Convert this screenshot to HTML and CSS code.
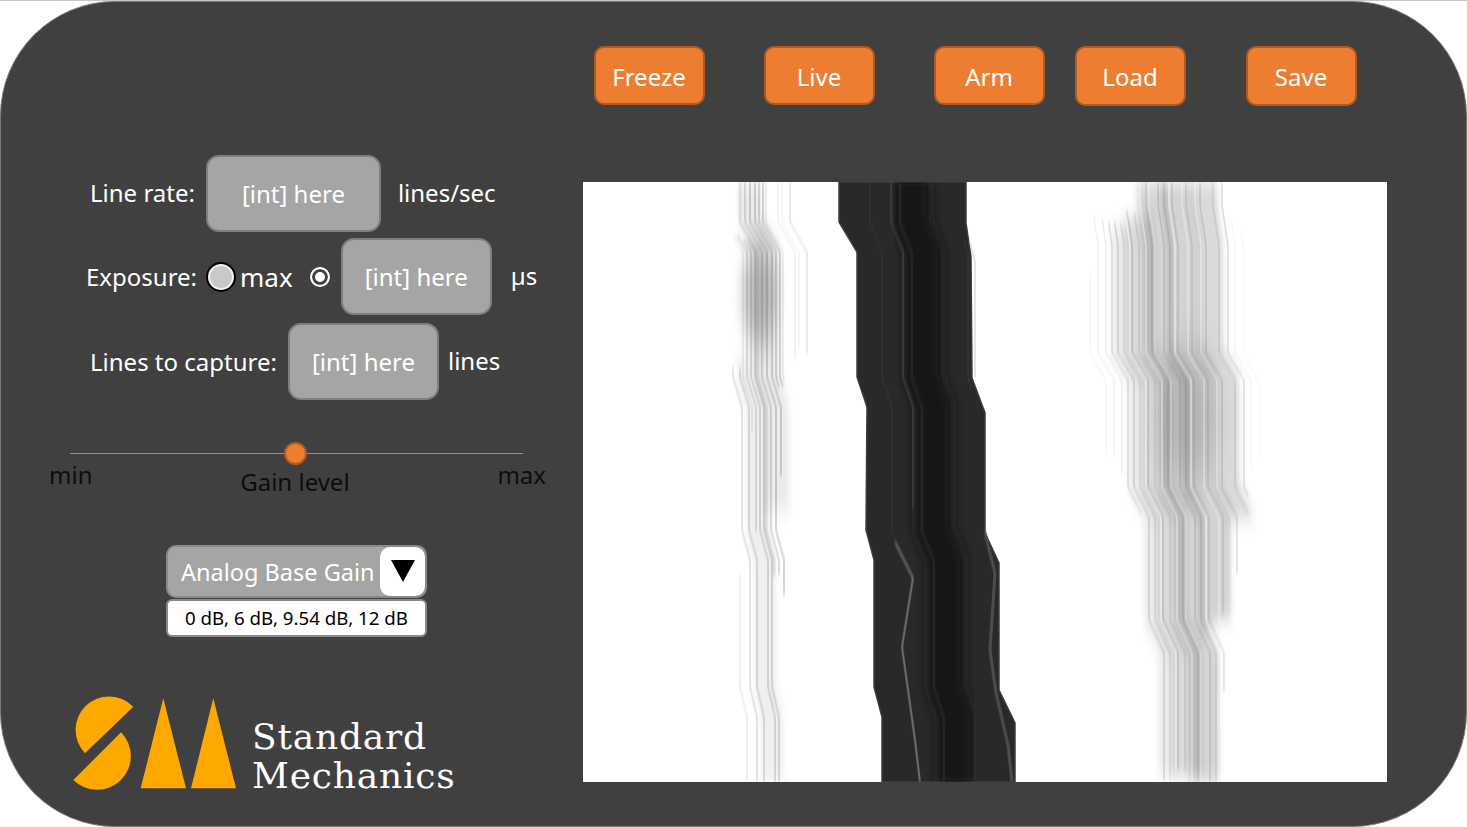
FILE: index.html
```html
<!DOCTYPE html>
<html lang="en">
<head>
    <meta charset="UTF-8">
    <title>Standard Mechanics camera control</title>
    <link rel="stylesheet" href="styles.css">
</head>
<body>
<div class="panel">
    <div class="side">
        <!-- Capture settings -->
        <div class="row row-rate">
            <span class="label">Line rate:</span>
            <div class="field field-wide">[int] here</div>
            <span class="unit unit-rate">lines/sec</span>
        </div>
        <div class="row row-exposure">
            <span class="label">Exposure:</span>
            <input class="radio-max" type="radio" name="exposure">
            <span class="max-text">max</span>
            <input class="radio-custom" type="radio" name="exposure" checked>
            <div class="field">[int] here</div>
            <span class="unit unit-us">µs</span>
        </div>
        <div class="row row-lines">
            <span class="label">Lines to capture:</span>
            <div class="field">[int] here</div>
            <span class="unit unit-lines">lines</span>
        </div>

        <!-- Gain slider -->
        <div class="slider">
            <div class="track"><span class="thumb"></span></div>
            <div class="slider-labels">
                <span>min</span>
                <span class="gain-label">Gain level</span>
                <span>max</span>
            </div>
        </div>

        <!-- Base gain dropdown -->
        <div class="dropdown">
            <div class="drop-head">
                <span class="drop-title">Analog Base Gain</span>
                <span class="drop-arrow"><span class="arrow"></span></span>
            </div>
            <div class="drop-value">0 dB, 6 dB, 9.54 dB, 12 dB</div>
        </div>

        <div class="logo">
            <svg class="logo-mark" width="165" height="94" viewBox="72 696 165 94">
                <path class="mark" d="M133.3 706.7L85 753.3A32.5 32.5 0 0 1 133.3 706.7Z"/>
                <path class="mark" d="M73.3 780L121 732.3A32.5 32.5 0 0 1 73.3 780Z"/>
                <path class="mark" d="M163.3 698.3L186 788.3H140.7Z"/>
                <path class="mark" d="M213.3 698.3L236 788.3H191Z"/>
            </svg>
            <div class="logo-text">Standard<br>Mechanics</div>
        </div>
    </div>

    <div class="main">
        <div class="toolbar">
            <button class="btn">Freeze</button>
            <button class="btn btn-live">Live</button>
            <button class="btn btn-arm">Arm</button>
            <button class="btn btn-load">Load</button>
            <button class="btn btn-save">Save</button>
        </div>

        <!-- Line scan frame -->
        <svg class="scan" width="804" height="600" viewBox="0 0 804 600">
            <defs>
                <path id="sl" d="M0 0V40L17 70V195L26 225V348L34 378V505L41 535V600"/>
                <path id="sd" d="M0 0V40L12 70V195L22 225V348L34 378V505L44 535V600"/>
                <path id="sr" d="M0 0V23L6 63V171L22 198V305L37 335V438L52 471V600"/>
                <filter id="soft" x="-20%" y="-5%" width="140%" height="110%"><feGaussianBlur stdDeviation="0.7 2"/></filter>
                <filter id="wide" x="-30%" y="-10%" width="160%" height="120%"><feGaussianBlur stdDeviation="2.5 9"/></filter>
                <filter id="core" x="-40%" y="-10%" width="180%" height="120%"><feGaussianBlur stdDeviation="6 3"/></filter>
                <filter id="blob" x="-60%" y="-60%" width="220%" height="220%"><feGaussianBlur stdDeviation="6 16"/></filter>
                <filter id="large" x="-80%" y="-60%" width="260%" height="220%"><feGaussianBlur stdDeviation="10 24"/></filter>
            </defs>

            <!-- left faint band -->
            <ellipse class="blob" cx="176" cy="113" rx="17" ry="52"/>
            <g class="streaks" filter="url(#wide)">
                <use href="#sl" x="168" stroke-width="24" stroke-opacity=".12" stroke-dasharray="335 9999"/>
                <use href="#sl" x="148" stroke-width="22" stroke-opacity=".1" stroke-dasharray="0 180 430 9999"/>
            </g>
            <g class="streaks" filter="url(#soft)">
                <use href="#sl" x="157" stroke-width="3" stroke-opacity=".14" stroke-dasharray="400 9999"/>
                <use href="#sl" x="162" stroke-width="2" stroke-opacity=".2" stroke-dasharray="400 9999"/>
                <use href="#sl" x="167" stroke-width="2" stroke-opacity=".24" stroke-dasharray="420 9999"/>
                <use href="#sl" x="172" stroke-width="2" stroke-opacity=".24" stroke-dasharray="300 9999"/>
                <use href="#sl" x="176" stroke-width="1.5" stroke-opacity=".28" stroke-dasharray="210 9999"/>
                <use href="#sl" x="180" stroke-width="1.5" stroke-opacity=".3" stroke-dasharray="210 9999"/>
                <use href="#sl" x="183" stroke-width="1" stroke-opacity=".2" stroke-dasharray="205 9999"/>
                <use href="#sl" x="195" stroke-opacity=".16" stroke-dasharray="180 9999"/>
                <use href="#sl" x="199" stroke-opacity=".1" stroke-dasharray="170 9999"/>
                <use href="#sl" x="207" stroke-width="1.3" stroke-opacity=".2" stroke-dasharray="175 9999"/>
                <use href="#sl" x="143" stroke-width="2" stroke-opacity=".1" stroke-dasharray="0 55 200 9999"/>
                <use href="#sl" x="147" stroke-width="2" stroke-opacity=".18" stroke-dasharray="0 55 300 9999"/>
                <use href="#sl" x="151" stroke-width="2" stroke-opacity=".2" stroke-dasharray="0 60 560 9999"/>
                <use href="#sl" x="155" stroke-width="2" stroke-opacity=".2" stroke-dasharray="0 60 560 9999"/>
                <use href="#sl" x="133" stroke-width="2" stroke-opacity=".16" stroke-dasharray="0 190 440 9999"/>
                <use href="#sl" x="140" stroke-width="2" stroke-opacity=".18" stroke-dasharray="0 190 440 9999"/>
                <use href="#sl" x="123" stroke-width="2" stroke-opacity=".1" stroke-dasharray="0 400 240 9999"/>
            </g>

            <!-- dark band -->
            <polygon class="dark" points="256,0 256,40 274,70 274,195 284,225 283,348 291,378 291,505 299,535 299,600 432,600 432,541 416,508 416,381 402,351 402,231 389,196 388,75 383,41 383,0"/>
            <g class="dark-inner" filter="url(#core)">
                <use href="#sd" x="329" stroke-width="36" stroke="#161616"/>
            </g>
            <g class="dark-lines" filter="url(#soft)">
                <use href="#sd" x="287" stroke-width="1.5" stroke-opacity=".4" stroke-dasharray="360 9999"/>
                <use href="#sd" x="308" stroke-width="2" stroke-opacity=".6" stroke-dasharray="330 9999"/>
                <use href="#sd" x="317" stroke-width="1.5" stroke-opacity=".35"/>
                <use href="#sd" x="347" stroke-width="1.5" stroke-opacity=".2"/>
                <use href="#sd" x="373" stroke-width="2" stroke-opacity=".4" stroke-dasharray="0 60 150 9999"/>
                <path class="bright" d="M312 360L330 396L319 465L332 558L337 600"/>
                <path class="bright-dim" d="M402 351L412 391L407 468L413 511L425 563L429 600"/>
            </g>
            <path class="halo" d="M387 60L392 80V195" />

            <!-- right wide band -->
            <ellipse class="blob-large" cx="605" cy="235" rx="28" ry="70"/>
            <g class="streaks" filter="url(#wide)">
                <use href="#sr" x="569" stroke-width="30" stroke-opacity=".24"/>
                <use href="#sr" x="552" stroke-width="30" stroke-opacity=".22" stroke-dasharray="0 36 570 9999"/>
                <use href="#sr" x="595" stroke-width="32" stroke-opacity=".26" stroke-dasharray="450 9999"/>
                <use href="#sr" x="622" stroke-width="24" stroke-opacity=".22" stroke-dasharray="345 9999"/>
                <use href="#sr" x="532" stroke-width="16" stroke-opacity=".12" stroke-dasharray="0 46 560 9999"/>
            </g>
            <g class="streaks" filter="url(#soft)">
                <use href="#sr" x="501" stroke-opacity=".07" stroke-dasharray="0 90 190 9999"/>
                <use href="#sr" x="509" stroke-width="1.2" stroke-opacity=".1" stroke-dasharray="0 36 240 9999"/>
                <use href="#sr" x="517" stroke-width="1.2" stroke-opacity=".14" stroke-dasharray="0 36 260 9999"/>
                <use href="#sr" x="523" stroke-width="1.5" stroke-opacity=".2" stroke-dasharray="0 40 300 9999"/>
                <use href="#sr" x="529" stroke-width="1.5" stroke-opacity=".22" stroke-dasharray="0 40 570 9999"/>
                <use href="#sr" x="535" stroke-width="1.5" stroke-opacity=".14" stroke-dasharray="0 40 570 9999"/>
                <use href="#sr" x="543" stroke-width="1.5" stroke-opacity=".22" stroke-dasharray="0 28 570 9999"/>
                <use href="#sr" x="550" stroke-width="1.5" stroke-opacity=".16" stroke-dasharray="0 30 570 9999"/>
                <use href="#sr" x="563" stroke-width="1.5" stroke-opacity=".18"/>
                <use href="#sr" x="575" stroke-width="1.5" stroke-opacity=".2"/>
                <use href="#sr" x="581" stroke-width="1.5" stroke-opacity=".15"/>
                <use href="#sr" x="589" stroke-width="1.5" stroke-opacity=".18" stroke-dasharray="520 9999"/>
                <use href="#sr" x="603" stroke-width="1.5" stroke-opacity=".18" stroke-dasharray="440 9999"/>
                <use href="#sr" x="617" stroke-width="1.5" stroke-opacity=".2" stroke-dasharray="400 9999"/>
                <use href="#sr" x="630" stroke-width="1.5" stroke-opacity=".16" stroke-dasharray="340 9999"/>
                <use href="#sr" x="639" stroke-width="1.3" stroke-opacity=".24" stroke-dasharray="320 9999"/>
                <use href="#sr" x="646" stroke-opacity=".08" stroke-dasharray="0 40 250 9999"/>
                <use href="#sr" x="654" stroke-opacity=".05" stroke-dasharray="0 50 230 9999"/>
            </g>
            <g class="gaps" filter="url(#soft)">
                <use href="#sr" x="557" stroke-opacity=".5"/>
                <use href="#sr" x="586" stroke-opacity=".55" stroke-dasharray="560 9999"/>
                <use href="#sr" x="599" stroke-opacity=".4" stroke-dasharray="480 9999"/>
                <use href="#sr" x="612" stroke-opacity=".35" stroke-dasharray="420 9999"/>
                <use href="#sr" x="541" stroke-opacity=".55" stroke-dasharray="0 40 560 9999"/>
                <use href="#sr" x="566" stroke-opacity=".35"/>
            </g>
        </svg>
    </div>
</div>
</body>
</html>
```
FILE: styles.css
```css
* { box-sizing: border-box; }
html, body { margin: 0; padding: 0; }
body { background: #fff; border-top: 1px solid #c8c8c8; font-family: "Noto Sans", "Open Sans", sans-serif; height: 827px; overflow: hidden; }

.panel { display: grid; grid-template-columns: 581.5px 804px; height: 826px; background: #404040; border: 1.5px solid #7a7a7a; border-radius: 115px; }

.side { display: flex; flex-direction: column; padding-top: 153px; color: #fff; font-size: 24px; }
.row { display: flex; align-items: center; height: 77px; }
.row-rate { padding-left: 89px; }
.row-rate .label { margin-top: -3px; }
.row-exposure { margin-top: 6px; padding-left: 85px; }
.row-lines { margin-top: 8px; padding-left: 89px; }
.label { margin-right: 11px; white-space: nowrap; }
.field { display: flex; align-items: center; justify-content: center; width: 151px; height: 77px; background: #a5a5a5; border: 2px solid #7f7f7f; border-radius: 13px; white-space: nowrap; }
.field-wide { width: 175px; }
.unit { margin-top: -3px; }
.unit-rate { margin-left: 17px; }
.unit-us { margin-left: 19px; }
.unit-lines { margin-left: 9px; }

.radio-max, .radio-custom { appearance: none; margin: 0; border-radius: 50%; flex: none; }
.radio-max { width: 30px; height: 30px; margin-left: -2px; background: #c9c9c9; border: 2px solid #000; box-shadow: inset 0 0 0 2px #f2f2f2; }
.max-text { margin: 0 17px 0 4px; font-size: 26px; }
.radio-custom { width: 20px; height: 20px; margin-right: 11px; background: #fff; border: 2px solid #fff; box-shadow: inset 0 0 0 3px #404040; }

.slider { margin: 52.5px 0 0 48px; width: 497px; color: #0d0d0d; }
.track { position: relative; height: 1px; margin: 0 23px 0 21px; background: #b08a70; }
.thumb { position: absolute; left: 214px; top: -11px; width: 23px; height: 23px; background: #ed7d31; border: 2px solid #ae5a21; border-radius: 50%; }
.slider-labels { display: flex; justify-content: space-between; margin-top: 4px; font-size: 24px; }
.gain-label { margin-top: 7px; }

.dropdown { width: 261px; margin: 47px 0 0 165px; }
.drop-head { display: flex; justify-content: space-between; height: 53px; padding-left: 13px; background: #a5a5a5; border: 2px solid #8a8a8a; border-radius: 10px; }
.drop-title { align-self: center; padding-top: 2px; font-size: 23.5px; white-space: nowrap; }
.drop-arrow { display: flex; align-items: center; justify-content: center; width: 45px; background: #fff; border-radius: 10px; }
.arrow { width: 0; height: 0; border-left: 12px solid transparent; border-right: 12px solid transparent; border-top: 22px solid #000; }
.drop-value { height: 38px; margin-top: 1px; line-height: 33px; text-align: center; font-size: 18.7px; color: #000; background: #fff; border: 2px solid #8a8a8a; border-radius: 6px; }

.logo { display: flex; align-items: flex-end; margin: 59px 0 0 71px; }
.logo-mark { flex: none; }
.mark { fill: #ffa800; }
.logo-text { margin: 0 0 -5px 15px; font-family: "DejaVu Serif", "Liberation Serif", serif; font-size: 36px; line-height: 39px; letter-spacing: 0.8px; white-space: nowrap; }

.main { display: flex; flex-direction: column; padding-top: 44px; }
.toolbar { display: flex; align-items: flex-start; height: 136px; padding-left: 11px; }
.btn { width: 111px; height: 59px; padding: 2px 0 0; color: #fff; background: #ed7d31; border: 2px solid #ae5a21; border-radius: 10px; font-family: inherit; font-size: 24px; cursor: pointer; }
.btn-live { margin-left: 59px; }
.btn-arm { margin-left: 59px; }
.btn-load { margin-left: 30px; height: 60px; padding-top: 0; }
.btn-save { margin-left: 60px; height: 60px; padding-top: 0; }

.scan { display: block; background: #fff; }
.streaks { fill: none; stroke: #555; stroke-width: 1; }
.gaps { fill: none; stroke: #fff; stroke-width: 1.5; }
.blob { fill: #8c8c8c; opacity: .55; filter: url(#blob); }
.blob-large { fill: #777; opacity: .3; filter: url(#large); }
.dark { fill: #292929; stroke: #3c3c3c; stroke-width: 1.5; }
.dark-inner { fill: none; }
.dark-lines { fill: none; stroke: #424242; }
.bright { stroke: #6e6e6e; stroke-width: 2; }
.bright-dim { stroke: #4e4e4e; stroke-width: 3; }
.halo { fill: none; stroke: #ddd; stroke-width: 1.5; }
```
